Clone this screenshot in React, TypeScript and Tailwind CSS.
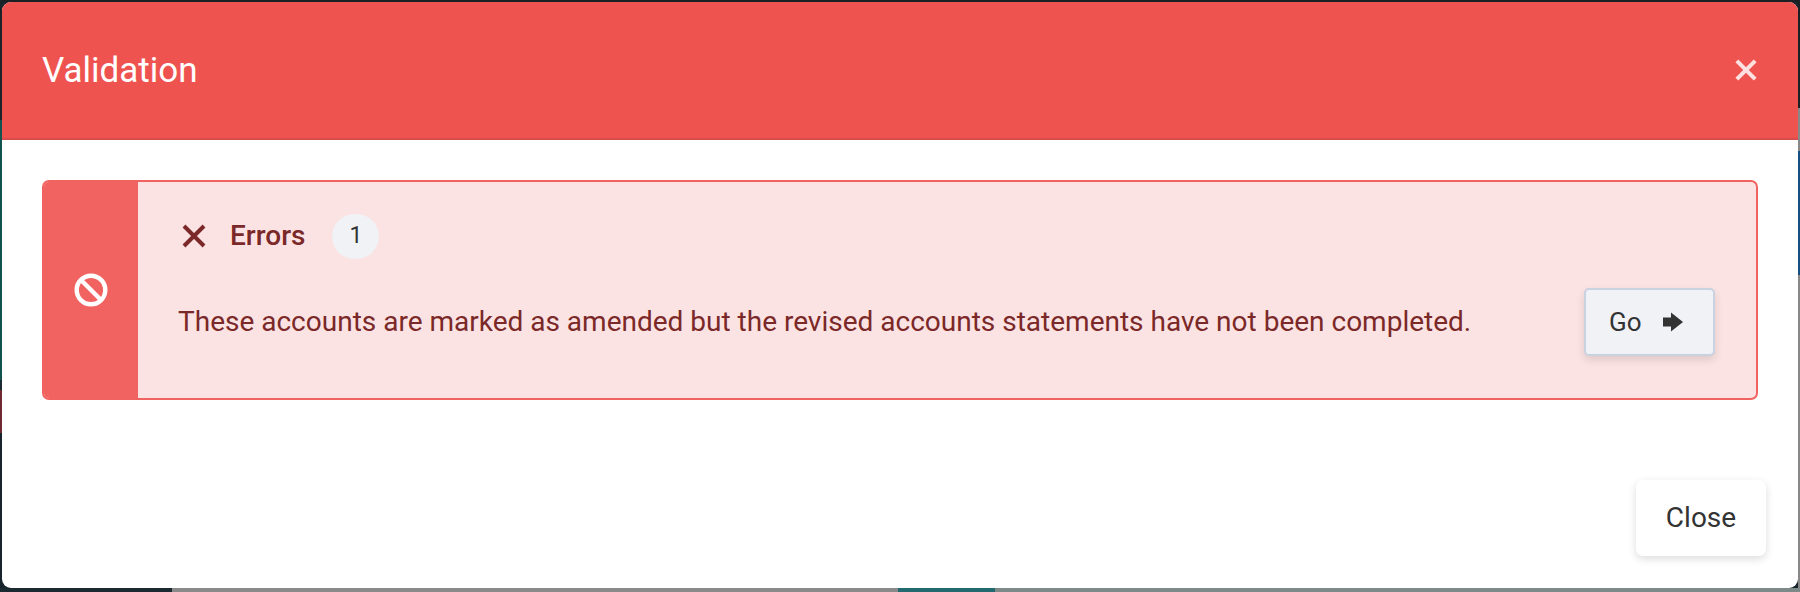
function BanIcon() {
  return (
    <svg width="34" height="34" viewBox="0 0 34 34" fill="none" stroke="#fff" strokeWidth="4.4">
      <circle cx="17" cy="17" r="14.3" />
      <path d="M7 7 L27 27" />
    </svg>
  );
}

function TimesIcon({ size, color, width }: { size: number; color: string; width: number }) {
  return (
    <svg width={size} height={size} viewBox="0 0 24 24" fill="none" stroke={color} strokeWidth={width}>
      <path d="M2 2 L22 22 M22 2 L2 22" />
    </svg>
  );
}

function ArrowIcon() {
  return (
    <svg width="20" height="20" viewBox="0 0 20 20" fill="#333333">
      <path d="M0 5.5 H8 V0.5 L20 10 L8 19.5 V14.5 H0 Z" />
    </svg>
  );
}

export default function App() {
  return (
    <div className="relative w-[1800px] h-[592px] overflow-hidden pt-[2px] px-[2px] pb-[4px] bg-[#17242c] font-['Roboto',sans-serif]">
      {/* page behind the modal */}
      <div className="absolute left-0 top-0 w-full h-[2px] bg-[#1a2024]" />
      <div className="absolute left-0 top-0 w-[2px] h-full bg-[linear-gradient(to_bottom,#1a2428_0,#1a2428_120px,#12524f_120px,#12524f_380px,#1c2b33_380px,#1c2b33_390px,#6e2a30_390px,#6e2a30_433px,#17242c_433px)]" />
      <div className="absolute right-0 top-0 w-[2px] h-full bg-[linear-gradient(to_bottom,#1a2024_0,#1a2024_108px,#888888_108px,#888888_151px,#155080_151px,#155080_275px,#888888_275px)]" />
      <div className="absolute left-0 bottom-0 w-full h-[4px] bg-[linear-gradient(to_right,#1b2a30_0,#1b2a30_172px,#8a8a8a_172px,#8a8a8a_898px,#236a70_898px,#236a70_995px,#7e8a88_995px)]" />

      <div className="relative h-full flex flex-col bg-white rounded-[9px] overflow-hidden">
        <header className="h-[138px] shrink-0 flex items-center justify-between pl-[40px] pr-[41px] bg-[#ef5350] border-b-2 border-[#d64d4b]">
          <h1 className="text-[35px] leading-none text-white">Validation</h1>
          <TimesIcon size={22} color="#fde0df" width={4.4} />
        </header>

        <div className="flex-1 pt-[40px] px-[40px]">
          <div className="h-[220px] flex rounded-[7px] overflow-hidden border-2 border-[#f16360] bg-[#fbe3e3]">
            <div className="w-[94px] shrink-0 flex items-center justify-center bg-[#f16360]">
              <BanIcon />
            </div>
            <div className="flex-1 flex flex-col pl-[40px] pr-[41px]">
              <div className="h-[100px] flex items-center shrink-0 pt-[8px] pl-[4px]">
                <TimesIcon size={24} color="#7b2828" width={4} />
                <span className="ml-[24px] text-[28px] leading-none font-medium text-[#7b2828]">Errors</span>
                <span className="ml-[27px] w-[47px] h-[45px] rounded-full flex items-center justify-center bg-[#f0f2f6] text-[23px] text-[#333333]">
                  1
                </span>
              </div>
              <div className="flex items-start justify-between">
                <p className="mt-[20px] text-[28px] leading-[40px] text-[#7b2828]">
                  These accounts are marked as amended but the revised accounts statements have not been completed.
                </p>
                <button className="w-[131px] h-[68px] mt-[6px] flex items-center pl-[23px] rounded-[5px] border-2 border-[#c8d2e0] bg-[#f0f2f6] shadow-[0_4px_8px_rgba(0,0,0,0.12)] text-[26px] text-[#333333]">
                  Go
                  <span className="ml-[21px]">
                    <ArrowIcon />
                  </span>
                </button>
              </div>
            </div>
          </div>
        </div>

        <div className="shrink-0 flex justify-end pr-[32px] pb-[32px]">
          <button className="w-[130px] h-[76px] rounded-[7px] bg-white shadow-[0_3px_8px_rgba(0,0,0,0.14)] text-[28px] text-[#333333]">
            Close
          </button>
        </div>
      </div>
    </div>
  );
}
